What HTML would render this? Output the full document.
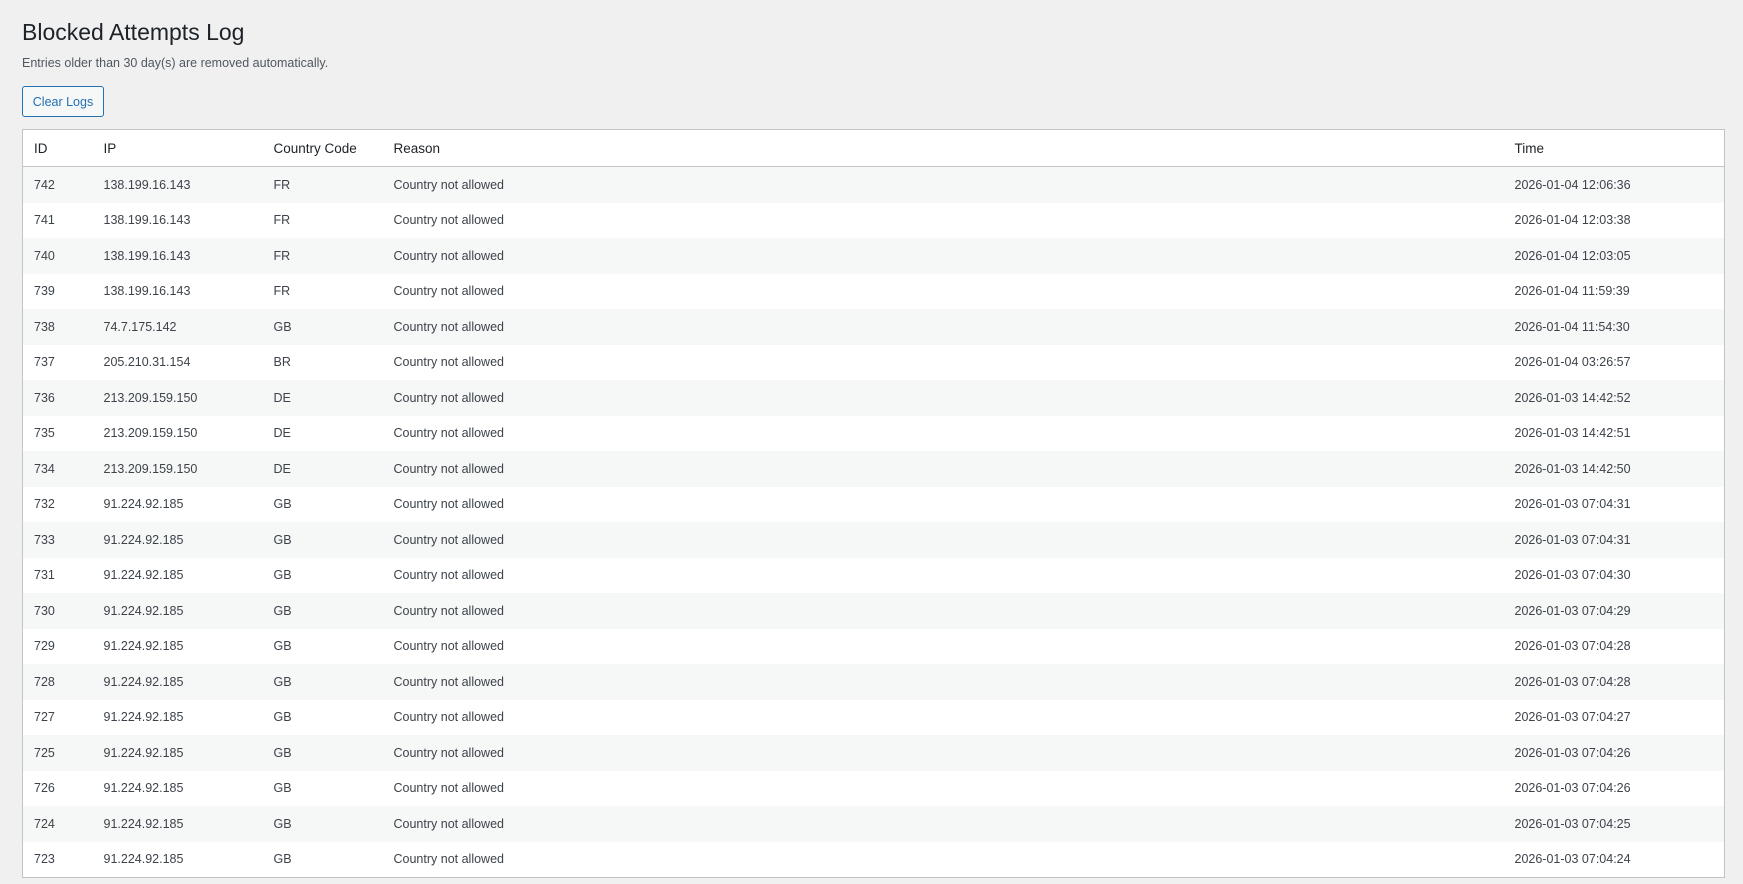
<!DOCTYPE html>
<html><head><style>
body{margin:0;background:#f0f0f1;font-family:"Liberation Sans",sans-serif;color:#3c434a;width:1743px;height:884px;overflow:hidden;position:relative}
h1{position:absolute;left:22px;top:19px;margin:0;font-size:23px;font-weight:400;color:#1d2327}
.sub{position:absolute;left:22px;top:56px;font-size:12.5px;color:#50575e}
.btn{position:absolute;left:22px;top:86px;width:80px;height:29px;border:1px solid #2271b1;border-radius:3px;color:#2271b1;font-size:12.5px;display:flex;align-items:center;justify-content:center;background:#f6f7f7}
table{position:absolute;left:22px;top:129px;width:1703px;border:1px solid #c3c4c7;border-collapse:collapse;background:#fff;font-size:12.5px}
th{font-weight:400;color:#1d2327;text-align:left;height:36px;border-bottom:1px solid #c3c4c7;font-size:13.5px;padding:0}
td{height:35.5px;padding:0}
tbody tr:nth-child(odd){background:#f6f7f7}
th:first-child,td:first-child{padding-left:11px}
</style></head><body>
<h1>Blocked Attempts Log</h1>
<div class="sub">Entries older than 30 day(s) are removed automatically.</div>
<div class="btn">Clear Logs</div>
<table>
<colgroup><col style="width:81px"><col style="width:170px"><col style="width:120px"><col style="width:1121px"><col></colgroup>
<thead><tr><th>ID</th><th>IP</th><th>Country Code</th><th>Reason</th><th>Time</th></tr></thead>
<tbody>
<tr><td>742</td><td>138.199.16.143</td><td>FR</td><td>Country not allowed</td><td>2026-01-04 12:06:36</td></tr>
<tr><td>741</td><td>138.199.16.143</td><td>FR</td><td>Country not allowed</td><td>2026-01-04 12:03:38</td></tr>
<tr><td>740</td><td>138.199.16.143</td><td>FR</td><td>Country not allowed</td><td>2026-01-04 12:03:05</td></tr>
<tr><td>739</td><td>138.199.16.143</td><td>FR</td><td>Country not allowed</td><td>2026-01-04 11:59:39</td></tr>
<tr><td>738</td><td>74.7.175.142</td><td>GB</td><td>Country not allowed</td><td>2026-01-04 11:54:30</td></tr>
<tr><td>737</td><td>205.210.31.154</td><td>BR</td><td>Country not allowed</td><td>2026-01-04 03:26:57</td></tr>
<tr><td>736</td><td>213.209.159.150</td><td>DE</td><td>Country not allowed</td><td>2026-01-03 14:42:52</td></tr>
<tr><td>735</td><td>213.209.159.150</td><td>DE</td><td>Country not allowed</td><td>2026-01-03 14:42:51</td></tr>
<tr><td>734</td><td>213.209.159.150</td><td>DE</td><td>Country not allowed</td><td>2026-01-03 14:42:50</td></tr>
<tr><td>732</td><td>91.224.92.185</td><td>GB</td><td>Country not allowed</td><td>2026-01-03 07:04:31</td></tr>
<tr><td>733</td><td>91.224.92.185</td><td>GB</td><td>Country not allowed</td><td>2026-01-03 07:04:31</td></tr>
<tr><td>731</td><td>91.224.92.185</td><td>GB</td><td>Country not allowed</td><td>2026-01-03 07:04:30</td></tr>
<tr><td>730</td><td>91.224.92.185</td><td>GB</td><td>Country not allowed</td><td>2026-01-03 07:04:29</td></tr>
<tr><td>729</td><td>91.224.92.185</td><td>GB</td><td>Country not allowed</td><td>2026-01-03 07:04:28</td></tr>
<tr><td>728</td><td>91.224.92.185</td><td>GB</td><td>Country not allowed</td><td>2026-01-03 07:04:28</td></tr>
<tr><td>727</td><td>91.224.92.185</td><td>GB</td><td>Country not allowed</td><td>2026-01-03 07:04:27</td></tr>
<tr><td>725</td><td>91.224.92.185</td><td>GB</td><td>Country not allowed</td><td>2026-01-03 07:04:26</td></tr>
<tr><td>726</td><td>91.224.92.185</td><td>GB</td><td>Country not allowed</td><td>2026-01-03 07:04:26</td></tr>
<tr><td>724</td><td>91.224.92.185</td><td>GB</td><td>Country not allowed</td><td>2026-01-03 07:04:25</td></tr>
<tr><td>723</td><td>91.224.92.185</td><td>GB</td><td>Country not allowed</td><td>2026-01-03 07:04:24</td></tr>
</tbody></table>
</body></html>
